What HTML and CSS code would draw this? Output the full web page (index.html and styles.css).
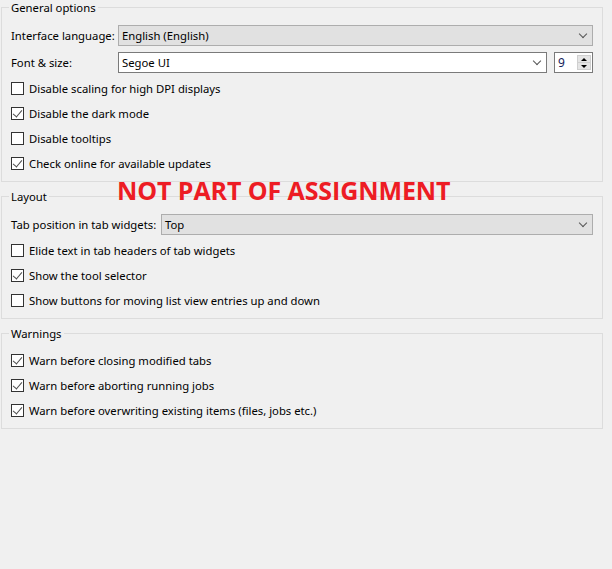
FILE: index.html
```html
<!DOCTYPE html>
<html>
<head>
<meta charset="utf-8">
<link rel="stylesheet" href="styles.css">
</head>
<body>
<div class="page">
  <fieldset class="group">
    <legend>General options</legend>
    <div class="row">
      <span class="label lang-label">Interface language:</span>
      <div class="combo combo-gray"><span>English (English)</span><span class="chev"></span></div>
    </div>
    <div class="row">
      <span class="label lang-label">Font &amp; size:</span>
      <div class="combo combo-white"><span>Segoe UI</span><span class="chev"></span></div>
      <div class="spin"><span class="spin-val">9</span><span class="spin-btns"><span class="up"></span><span class="down"></span></span></div>
    </div>
    <label class="check"><span class="box"></span>Disable scaling for high DPI displays</label>
    <label class="check"><span class="box checked"></span>Disable the dark mode</label>
    <label class="check"><span class="box"></span>Disable tooltips</label>
    <label class="check"><span class="box checked"></span>Check online for available updates</label>
  </fieldset>

  <fieldset class="group">
    <legend>Layout</legend>
    <div class="row">
      <span class="label tab-label">Tab position in tab widgets:</span>
      <div class="combo combo-gray"><span>Top</span><span class="chev"></span></div>
    </div>
    <label class="check"><span class="box"></span>Elide text in tab headers of tab widgets</label>
    <label class="check"><span class="box checked"></span>Show the tool selector</label>
    <label class="check"><span class="box"></span>Show buttons for moving list view entries up and down</label>
  </fieldset>

  <fieldset class="group">
    <legend>Warnings</legend>
    <label class="check"><span class="box checked"></span>Warn before closing modified tabs</label>
    <label class="check"><span class="box checked"></span>Warn before aborting running jobs</label>
    <label class="check"><span class="box checked"></span>Warn before overwriting existing items (files, jobs etc.)</label>
  </fieldset>

  <div class="stamp">NOT PART OF ASSIGNMENT</div>
</div>
</body>
</html>
```

FILE: styles.css
```css
* { box-sizing: border-box; }
html, body { margin: 0; padding: 0; }
body {
  background: #f0f0f0;
  font-family: "Noto Sans", "Open Sans", sans-serif;
  font-size: 11.3px;
  color: #000;
  width: 612px;
  height: 569px;
  overflow: hidden;
}
.page {
  position: relative;
  padding: 0 0 0 1px;
}
.group {
  width: 602px;
  margin: 0 0 7px 0;
  border: 1px solid #dcdcdc;
  padding: 10px 9px 8px 9px;
  display: flex;
  flex-direction: column;
  gap: 6px;
  min-width: 0;
}
.group legend {
  padding: 0 2px;
  margin-left: -2px;
  line-height: 15px;
  height: 15px;
}
.row {
  display: flex;
  align-items: center;
  height: 21px;
}
.label { white-space: nowrap; }
.lang-label { width: 107px; flex: none; }
.tab-label { width: 150px; flex: none; }
.combo {
  flex: 1;
  height: 21px;
  display: flex;
  align-items: center;
  justify-content: space-between;
  padding: 0 6px 0 3px;
}
.combo-gray { background: #e1e1e1; border: 1px solid #adadad; }
.combo-white { background: #fff; border: 1px solid #7a7a7a; }
.chev {
  width: 6px; height: 6px;
  border-right: 1px solid #555;
  border-bottom: 1px solid #555;
  transform: rotate(45deg);
  margin-top: -4px;
}
.spin {
  flex: none;
  width: 39px;
  height: 21px;
  margin-left: 7px;
  background: #fff;
  border: 1px solid #7a7a7a;
  display: flex;
  align-items: center;
  justify-content: space-between;
  padding: 0 1px 0 3px;
}
.spin-val { color: #14205a; font-size: 12px; }
.spin-btns {
  width: 14px;
  height: 15px;
  display: flex;
  flex-direction: column;
  background: #e5e5e5;
  border: 1px solid #cfcfcf;
}
.spin-btns .up, .spin-btns .down {
  flex: 1;
  display: flex;
  align-items: center;
  justify-content: center;
}
.spin-btns .up::before {
  content: "";
  border-left: 3px solid transparent;
  border-right: 3px solid transparent;
  border-bottom: 3px solid #000;
}
.spin-btns .down::before {
  content: "";
  border-left: 3px solid transparent;
  border-right: 3px solid transparent;
  border-top: 3px solid #000;
}
.spin-btns .down { border-top: 1px solid #cfcfcf; }
.check {
  display: flex;
  align-items: center;
  height: 19px;
  white-space: nowrap;
}
.box {
  width: 13px;
  height: 13px;
  border: 1px solid #333;
  background: #fff;
  margin-right: 5px;
  position: relative;
  flex: none;
}
.box.checked::after {
  content: "";
  position: absolute;
  left: 3px;
  top: 0px;
  width: 4px;
  height: 8px;
  border-right: 1px solid #4d4d4d;
  border-bottom: 1px solid #4d4d4d;
  transform: rotate(40deg);
}
.stamp {
  position: absolute;
  left: 117px;
  top: 175px;
  font-family: "Open Sans", "Noto Sans", sans-serif;
  font-weight: 700;
  font-size: 25px;
  letter-spacing: -0.1px;
  color: #ed1c24;
  line-height: 30px;
  white-space: nowrap;
}
```
